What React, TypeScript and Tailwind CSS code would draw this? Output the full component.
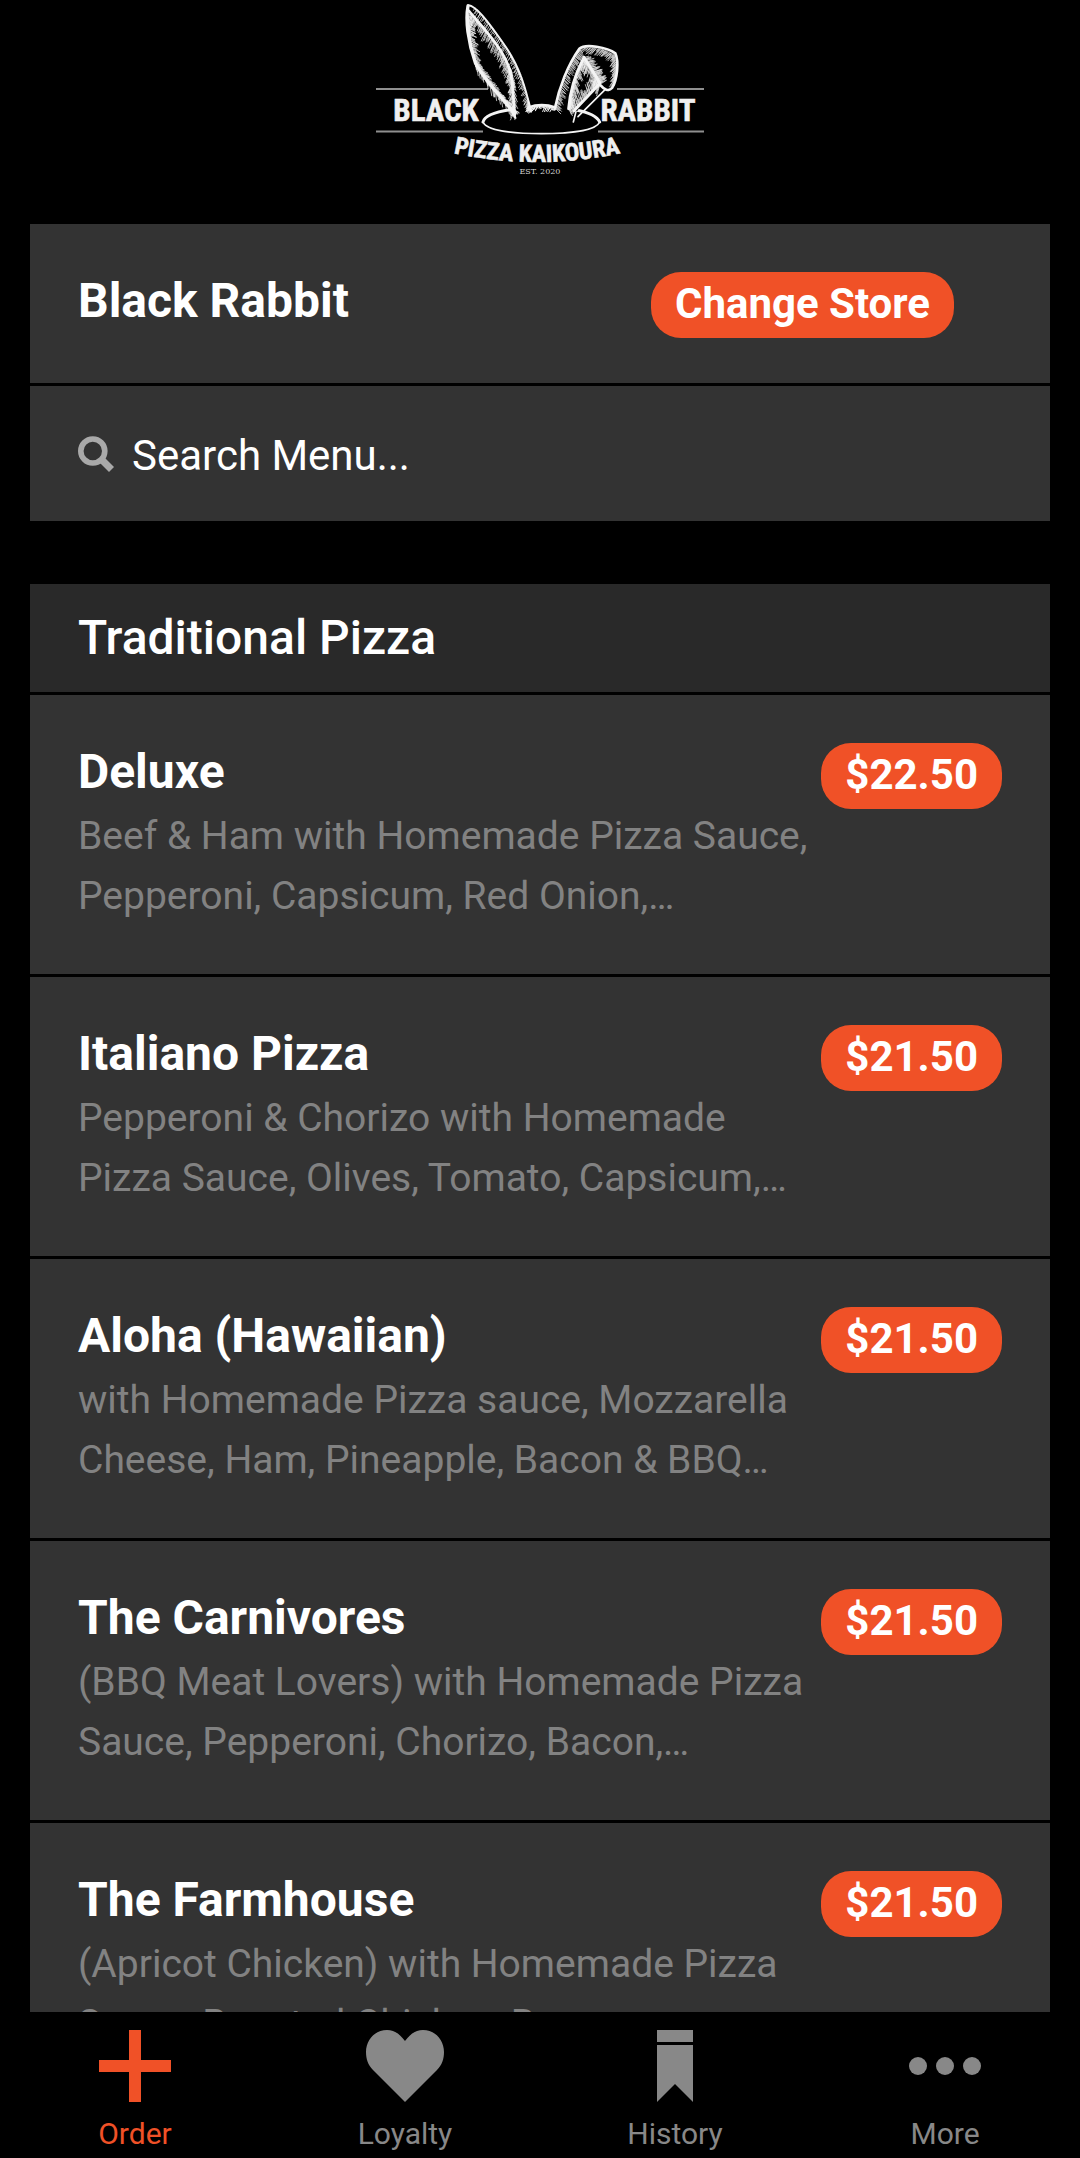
import React from "react";

const items = [
  { name: "Deluxe", price: "$22.50", lines: ["Beef & Ham with Homemade Pizza Sauce,", "Pepperoni, Capsicum, Red Onion,…"] },
  { name: "Italiano Pizza", price: "$21.50", lines: ["Pepperoni & Chorizo with Homemade", "Pizza Sauce, Olives, Tomato, Capsicum,…"] },
  { name: "Aloha (Hawaiian)", price: "$21.50", lines: ["with Homemade Pizza sauce, Mozzarella", "Cheese, Ham, Pineapple, Bacon & BBQ…"] },
  { name: "The Carnivores", price: "$21.50", lines: ["(BBQ Meat Lovers) with Homemade Pizza", "Sauce, Pepperoni, Chorizo, Bacon,…"] },
  { name: "The Farmhouse", price: "$21.50", lines: ["(Apricot Chicken) with Homemade Pizza", "Sauce, Roasted Chicken, Bacon,…"] },
];

type Point = [number, number];

/** Short pencil strokes that start on a polyline and run in one direction. */
function hatch(points: Point[], dx: number, dy: number, perSegment: number, seed: number) {
  let state = seed;
  const random = () => {
    state = (state * 16807) % 2147483647;
    return state / 2147483647;
  };
  let d = "";
  for (let i = 0; i < points.length - 1; i++) {
    const [x1, y1] = points[i];
    const [x2, y2] = points[i + 1];
    for (let k = 0; k < perSegment; k++) {
      const t = (k + random()) / perSegment;
      const length = 0.3 + random() * 0.9;
      const x = x1 + (x2 - x1) * t;
      const y = y1 + (y2 - y1) * t;
      d += `M${x.toFixed(1)} ${y.toFixed(1)}l${(dx * length).toFixed(1)} ${(dy * length).toFixed(1)}`;
    }
  }
  return d;
}

const leftEdge: Point[] = [[322, 40], [326, 100], [345, 185], [400, 265], [462, 335]];
const leftRidge: Point[] = [[334, 42], [375, 88], [420, 148], [448, 200], [460, 255], [464, 335]];
const leftOuter: Point[] = [[345, 24], [400, 88], [450, 160], [482, 225], [505, 300], [513, 330]];
const rightOuter: Point[] = [[586, 325], [602, 270], [630, 200], [658, 148]];
const foldTop: Point[] = [[665, 142], [725, 147], [764, 165], [770, 210], [762, 258]];
const foldEdge: Point[] = [[674, 172], [702, 215], [722, 250]];
const innerLeft: Point[] = [[672, 172], [645, 230], [632, 280], [626, 325]];
const innerRight: Point[] = [[718, 250], [680, 285], [642, 330]];

function Logo() {
  return (
    <svg viewBox="0 0 360 190" className="h-[190px] w-[360px]" role="img" aria-label="Black Rabbit Pizza Kaikoura, established 2020">
      <path d="M16 89H128M257 89H344M16 131.500H123M238 131.500H344" stroke="#8f8f8f" strokeWidth="2" />
      <g transform="scale(.33333)" fill="none" stroke="#f4f4f4" strokeLinecap="round" strokeLinejoin="round">
        <ellipse cx="544" cy="363" rx="175" ry="39" fill="#000" stroke="none" />
        <path d="M369 366C380 392 460 401 544 401S708 392 719 366" strokeWidth="5" />
        <path d="M369 366C374 346 415 334 460 328M648 330C690 338 712 350 719 366" strokeWidth="9" />
        <path d="M322 14C316 60 322 120 345 190C375 245 430 295 468 350L515 335C505 250 480 195 440 145C400 85 350 15 322 14Z" fill="#000" stroke="none" />
        <path d="M586 330C600 260 628 190 658 146C675 130 740 140 766 160C776 190 772 240 755 268C740 276 728 264 718 250L642 345Z" fill="#000" stroke="none" />
        <path
          strokeWidth="2.200"
          d={
            hatch(leftEdge, 20, 10, 34, 11) +
            hatch(leftEdge, 6, 34, 18, 17) +
            hatch(leftRidge, -12, 26, 24, 23) +
            hatch(leftRidge, 10, 20, 14, 31) +
            hatch(leftOuter, -10, 16, 18, 47)
          }
        />
        <path
          strokeWidth="2.200"
          d={
            hatch(rightOuter, 14, 14, 26, 53) +
            hatch(foldTop, -14, 16, 22, 61) +
            hatch(foldEdge, 20, -6, 24, 71) +
            hatch(foldEdge, -10, 34, 20, 83) +
            hatch(innerLeft, 12, 28, 24, 97) +
            hatch(innerRight, -8, -24, 22, 101)
          }
        />
        <path strokeWidth="10" d="M324 18C316 60 324 125 346 188C375 245 425 290 464 342" />
        <path strokeWidth="8" d="M326 32C350 62 390 100 424 155C460 210 458 265 464 350" />
        <path strokeWidth="6" d="M324 16C350 16 395 80 440 145C480 205 497 265 513 335" />
        <path strokeWidth="8" d="M584 328C597 262 625 192 658 146C676 130 742 142 766 160C777 185 772 240 756 264C746 276 732 268 722 256" />
        <path strokeWidth="9" d="M672 172L720 250L642 332M670 176C645 225 630 275 626 326" />
        <path strokeWidth="5" d="M712 258L650 322M736 268L654 350M648 335L640 366M455 335L467 354" />
        <path strokeWidth="7" d="M505 322Q545 308 586 322" />
        <path strokeWidth="3" d={hatch([[506, 320], [545, 316], [586, 322]], -8, 14, 18, 113)} />
      </g>
      <g fill="#efefef" stroke="#efefef" strokeWidth=".6" fontFamily="'Roboto Condensed','Liberation Sans Narrow',Roboto,sans-serif" fontWeight="700">
        <text x="76" y="121" textAnchor="middle" fontSize="31">BLACK</text>
        <text x="288" y="121" textAnchor="middle" fontSize="31">RABBIT</text>
        <path id="tagline" d="M84 151Q177 173 270 151" fill="none" stroke="none" />
        <text fontSize="24" textAnchor="middle">
          <textPath href="#tagline" startOffset="50%">PIZZA KAIKOURA</textPath>
        </text>
      </g>
      <text x="180" y="174" textAnchor="middle" fontSize="8" fill="#d4d4d4" fontFamily="'DejaVu Serif','Liberation Serif',serif">EST. 2020</text>
    </svg>
  );
}

const pill = "flex h-[66px] shrink-0 items-center rounded-[30px] bg-[#f05127] px-6 pb-0.5 text-[42px] leading-none font-bold";

const tabs = [
  { label: "Order", width: 72, shape: <path d="M30 0h12v30h30v12H42v30H30V42H0V30h30z" /> },
  { label: "Loyalty", width: 78, shape: <path d="M39 11C44 4 50 0 57 0C69 0 78 10 78 22C78 29 76 35 71 40L39 72L7 40C2 35 0 29 0 22C0 10 9 0 21 0C28 0 34 4 39 11Z" /> },
  { label: "History", width: 36, shape: <path d="M0 0h36v12H0zM0 15h36v57L18 54L0 72z" /> },
  {
    label: "More",
    width: 72,
    shape: (
      <>
        <circle cx="9" cy="36" r="9" />
        <circle cx="36" cy="36" r="9" />
        <circle cx="63" cy="36" r="9" />
      </>
    ),
  },
];

export default function App() {
  return (
    <div className="flex h-screen flex-col overflow-hidden bg-black font-[Roboto,sans-serif] text-white">
      <header className="flex h-[224px] shrink-0 justify-center">
        <Logo />
      </header>

      <main className="min-h-0 flex-1 overflow-hidden px-[30px]">
        <section className="mb-[63px] flex flex-col gap-[3px]">
          <div className="flex items-start justify-between bg-[#333333] pt-12 pr-24 pb-[45px] pl-12">
            <h1 className="text-[48px] leading-[58px] font-bold">Black Rabbit</h1>
            <button type="button" className={pill}>Change Store</button>
          </div>
          <label className="flex h-[135px] items-center gap-[18px] bg-[#333333] px-12">
            <svg viewBox="0 0 36 36" className="size-9 shrink-0" fill="none" stroke="#a9a9a9" aria-hidden="true">
              <circle cx="14.800" cy="15" r="12" strokeWidth="5.600" />
              <path d="M22.500 22.500L33.500 33.500" strokeWidth="7" />
            </svg>
            <input
              type="text"
              aria-label="Search menu"
              placeholder="Search Menu..."
              className="min-w-0 flex-1 bg-transparent pt-1 text-[42px] leading-[50px] outline-none placeholder:text-white placeholder:opacity-100"
            />
          </label>
        </section>

        <section className="flex flex-col gap-[3px]">
          <h2 className="bg-[#292929] px-12 py-6 text-[48px] leading-[60px] font-medium">Traditional Pizza</h2>
          {items.map((item) => (
            <article key={item.name} className="flex items-start justify-between bg-[#333333] p-12">
              <div className="min-w-0">
                <h3 className="text-[48px] leading-[58px] font-bold">{item.name}</h3>
                <p className="mt-[5px] text-[39px] leading-[60px] whitespace-nowrap text-[#828282]">
                  {item.lines[0]}
                  <br />
                  {item.lines[1]}
                </p>
              </div>
              <button type="button" className={pill}>{item.price}</button>
            </article>
          ))}
        </section>
      </main>

      <nav className="grid h-[146px] shrink-0 grid-cols-4 bg-black pt-[18px]">
        {tabs.map((tab, index) => (
          <a
            key={tab.label}
            href={`#${tab.label.toLowerCase()}`}
            aria-current={index === 0 ? "page" : undefined}
            className={`flex flex-col items-center gap-[15px] ${index === 0 ? "text-[#f05127]" : "text-[#888888]"}`}
          >
            <svg width={tab.width} height="72" viewBox={`0 0 ${tab.width} 72`} fill="currentColor" aria-hidden="true">
              {tab.shape}
            </svg>
            <span className="text-[30px] leading-[34px]">{tab.label}</span>
          </a>
        ))}
      </nav>
    </div>
  );
}
